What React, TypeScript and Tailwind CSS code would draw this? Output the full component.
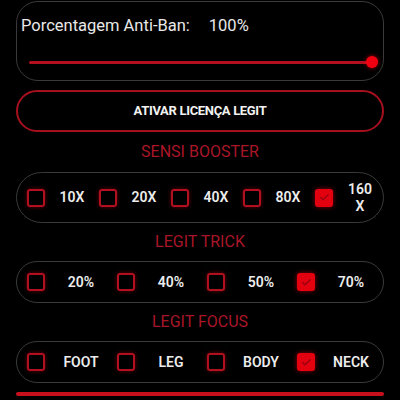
import { Check } from 'lucide-react'

// ─── Checkbox ────────────────────────────────────────────────────────────────
function Box({ checked }: { checked?: boolean }) {
  if (checked) {
    return (
      <span className="flex h-[18px] w-[18px] flex-shrink-0 items-center justify-center rounded-[3px] bg-[#e3000f] shadow-[0_0_5px_rgba(230,0,20,0.6)]">
        <Check size={11} strokeWidth={3} className="text-[#9a0012]" />
      </span>
    )
  }
  return (
    <span className="h-[18px] w-[18px] flex-shrink-0 rounded-[3px] border-2 border-[#b3101f] shadow-[0_0_4px_rgba(200,0,20,0.5)]" />
  )
}

interface Opt {
  label: React.ReactNode
  checked?: boolean
}

function OptionRow({ options, cols, height }: { options: Opt[]; cols: string; height: string }) {
  return (
    <div className={`flex items-center rounded-full border border-[#3a3a3a] pl-[10px] ${height}`}>
      <div className={`grid ${cols}`}>
        {options.map((o, i) => (
          <div key={i} className="flex items-center">
            <Box checked={o.checked} />
            <span className="flex-1 text-center text-[14px] font-semibold leading-[17px] text-[#ececec]">
              {o.label}
            </span>
          </div>
        ))}
      </div>
    </div>
  )
}

function Title({ children, height }: { children: React.ReactNode; height: string }) {
  return (
    <div className={`flex items-center justify-center text-[16px] text-[#aa1628] ${height}`}>
      {children}
    </div>
  )
}

export default function App() {
  return (
    <div
      className="h-[400px] w-[400px] overflow-hidden bg-black px-[16px]"
      style={{ fontFamily: 'Roboto, "Liberation Sans", sans-serif' }}
    >
      {/* Anti-ban slider panel */}
      <div className="mt-[1px] flex h-[80px] flex-col rounded-[22px] border border-[#3a3a3a] px-[4px]">
        <div className="mt-[12px] flex items-center text-[16.5px] text-[#e8e8e8]">
          <span>Porcentagem Anti-Ban:</span>
          <span className="ml-[19px]">100%</span>
        </div>
        <div className="relative ml-[8px] mr-[7px] mt-[22px] h-[3px] rounded-full bg-[#b3101f]">
          <span className="absolute -right-[6px] -top-[5px] h-[12px] w-[12px] rounded-full bg-[#f00010] shadow-[0_0_4px_rgba(255,0,20,0.7)]" />
        </div>
      </div>

      {/* License button */}
      <button className="mt-[9px] flex h-[42px] w-full items-center justify-center rounded-full border-2 border-[#a5101e] text-[13px] font-bold tracking-tight text-[#f2f2f2]">
        ATIVAR LICENÇA LEGIT
      </button>

      <Title height="h-[40px]">SENSI BOOSTER</Title>
      <OptionRow
        height="h-[51px]"
        cols="grid-cols-[repeat(5,72px)]"
        options={[
          { label: '10X' },
          { label: '20X' },
          { label: '40X' },
          { label: '80X' },
          { label: <>160<br />X</>, checked: true },
        ]}
      />

      <Title height="h-[38px]">LEGIT TRICK</Title>
      <OptionRow
        height="h-[42px]"
        cols="grid-cols-[repeat(4,90px)]"
        options={[
          { label: '20%' },
          { label: '40%' },
          { label: '50%' },
          { label: '70%', checked: true },
        ]}
      />

      <Title height="h-[38px]">LEGIT FOCUS</Title>
      <OptionRow
        height="h-[42px]"
        cols="grid-cols-[repeat(4,90px)]"
        options={[
          { label: 'FOOT' },
          { label: 'LEG' },
          { label: 'BODY' },
          { label: 'NECK', checked: true },
        ]}
      />

      {/* bottom accent line */}
      <div className="mt-[9px] h-[4px] rounded-full bg-[#c8101c]" />
    </div>
  )
}
